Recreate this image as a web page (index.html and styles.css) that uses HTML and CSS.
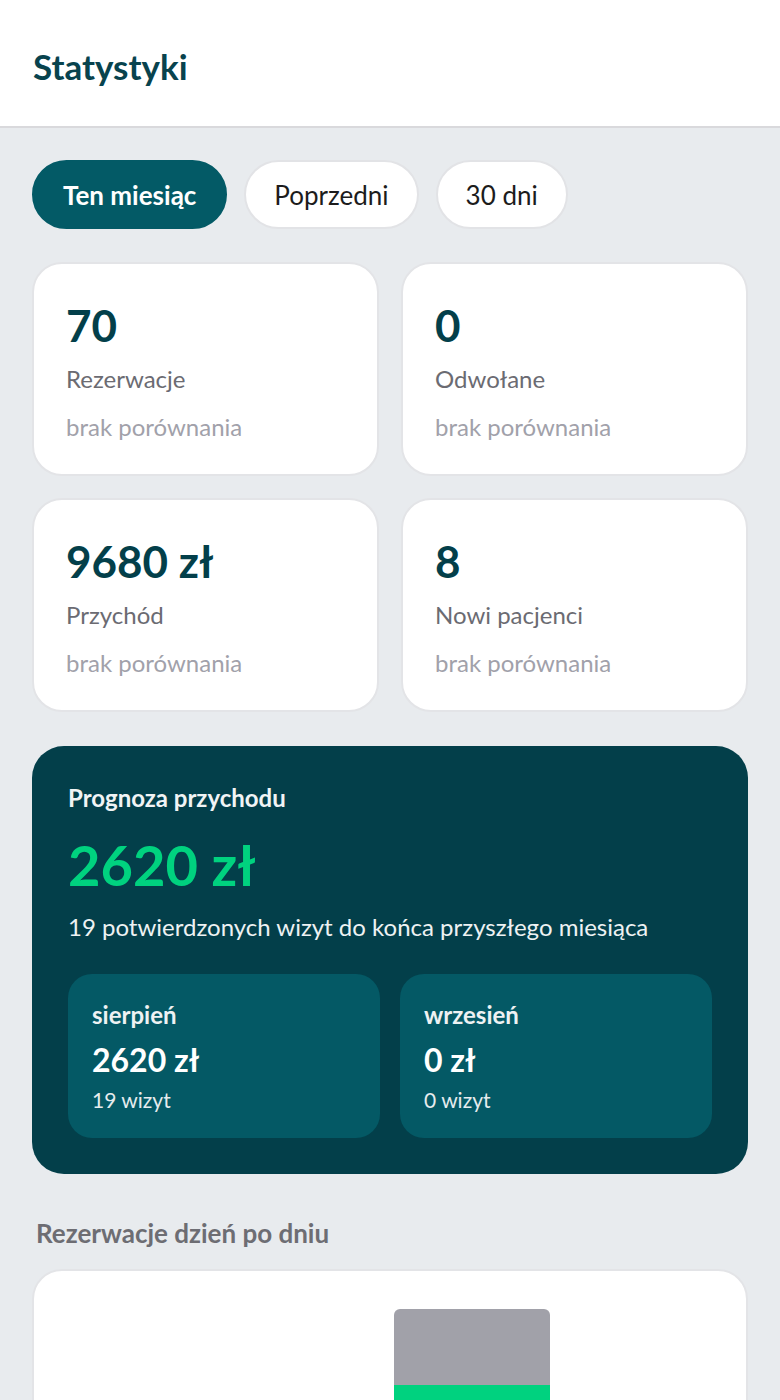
FILE: index.html
```html
<!DOCTYPE html>
<html lang="pl">
<head>
<meta charset="utf-8">
<title>Statystyki</title>
<link rel="stylesheet" href="styles.css">
</head>
<body>
<header class="topbar">
  <h1 class="title">Statystyki</h1>
</header>
<main class="content">
  <nav class="tabs">
    <button class="tab tab-active">Ten miesiąc</button>
    <button class="tab">Poprzedni</button>
    <button class="tab">30 dni</button>
  </nav>

  <section class="stats">
    <div class="stat">
      <div class="stat-value">70</div>
      <div class="stat-label">Rezerwacje</div>
      <div class="stat-cmp">brak porównania</div>
    </div>
    <div class="stat">
      <div class="stat-value">0</div>
      <div class="stat-label">Odwołane</div>
      <div class="stat-cmp">brak porównania</div>
    </div>
    <div class="stat">
      <div class="stat-value">9680 zł</div>
      <div class="stat-label">Przychód</div>
      <div class="stat-cmp">brak porównania</div>
    </div>
    <div class="stat">
      <div class="stat-value">8</div>
      <div class="stat-label">Nowi pacjenci</div>
      <div class="stat-cmp">brak porównania</div>
    </div>
  </section>

  <section class="forecast">
    <div class="fc-title">Prognoza przychodu</div>
    <div class="fc-amount">2620 zł</div>
    <div class="fc-desc">19 potwierdzonych wizyt do końca przyszłego miesiąca</div>
    <div class="fc-months">
      <div class="fc-month">
        <div class="fm-name">sierpień</div>
        <div class="fm-amount">2620 zł</div>
        <div class="fm-count">19 wizyt</div>
      </div>
      <div class="fc-month">
        <div class="fm-name">wrzesień</div>
        <div class="fm-amount">0 zł</div>
        <div class="fm-count">0 wizyt</div>
      </div>
    </div>
  </section>

  <h2 class="section-title">Rezerwacje dzień po dniu</h2>
  <section class="chart">
    <div class="bar">
      <div class="bar-gray"></div>
      <div class="bar-green"></div>
    </div>
  </section>
</main>
</body>
</html>
```
FILE: styles.css
```css
* { box-sizing: border-box; }
html, body { margin: 0; padding: 0; }
body {
  background: #e8ebee;
  font-family: "Lato", "Noto Sans", sans-serif;
  color: #222;
}
.topbar {
  background: #fff;
  height: 128px;
  border-bottom: 2px solid #d9d9dc;
  display: flex;
  align-items: center;
  padding: 0 33px;
}
.title {
  margin: 6px 0 0;
  font-size: 35px;
  font-weight: 700;
  color: #08434e;
  line-height: 44px;
}
.content {
  padding: 32px 32px 0;
}
.tabs {
  display: flex;
  gap: 17px;
}
.tab {
  font-family: inherit;
  height: 69px;
  padding: 0 28px;
  border-radius: 35px;
  border: 2px solid #e2e3e6;
  background: #fff;
  color: #1c1c1c;
  font-size: 26px;
  font-weight: 400;
}
.tab-active {
  padding: 0 29px;
  background: #035a66;
  border-color: #035a66;
  color: #fff;
  font-weight: 700;
}
.stats {
  margin-top: 33px;
  display: grid;
  grid-template-columns: 1fr 1fr;
  gap: 22px;
}
.stat {
  background: #fff;
  border: 2px solid #e3e4e7;
  border-radius: 30px;
  padding: 35px 32px 31px 32px;
}
.stat-value {
  font-size: 44px;
  line-height: 52px;
  font-weight: 700;
  color: #033f4a;
}
.stat-label {
  margin-top: 12px;
  font-size: 24px;
  line-height: 32px;
  color: #6b6b72;
}
.stat-cmp {
  margin-top: 16px;
  font-size: 24px;
  line-height: 32px;
  color: #a1a1aa;
}
.forecast {
  margin-top: 34px;
  background: #033f4a;
  border-radius: 32px;
  padding: 36px 36px 36px;
  color: #fff;
}
.fc-title {
  font-size: 24px;
  line-height: 32px;
  font-weight: 700;
  color: #f1f4f5;
}
.fc-amount {
  margin-top: 19px;
  font-size: 56px;
  line-height: 64px;
  font-weight: 700;
  color: #00d27f;
}
.fc-desc {
  margin-top: 15px;
  font-size: 24px;
  line-height: 30px;
  color: #eef2f3;
}
.fc-months {
  margin-top: 32px;
  display: grid;
  grid-template-columns: 1fr 1fr;
  gap: 20px;
}
.fc-month {
  background: #045965;
  border-radius: 24px;
  padding: 26px 24px 24px;
  min-height: 163px;
}
.fm-name {
  font-size: 24px;
  line-height: 30px;
  font-weight: 700;
  color: #eef2f3;
}
.fm-amount {
  margin-top: 10px;
  font-size: 32px;
  line-height: 40px;
  font-weight: 700;
  color: #fff;
}
.fm-count {
  margin-top: 6px;
  font-size: 21px;
  line-height: 28px;
  color: #e6ecee;
}
.section-title {
  margin: 43px 0 0 4px;
  font-size: 26px;
  line-height: 32px;
  font-weight: 700;
  color: #6d6d73;
}
.chart {
  margin-top: 20px;
  background: #fff;
  border: 2px solid #e3e4e7;
  border-radius: 30px;
  height: 300px;
  padding: 38px 0 0 360px;
  display: flex;
}
.bar {
  width: 156px;
  display: flex;
  flex-direction: column;
  border-radius: 6px 6px 0 0;
  overflow: hidden;
  height: 200px;
}
.bar-gray { height: 76px; background: #a1a1a9; }
.bar-green { flex: 1; background: #00d27f; }
```
